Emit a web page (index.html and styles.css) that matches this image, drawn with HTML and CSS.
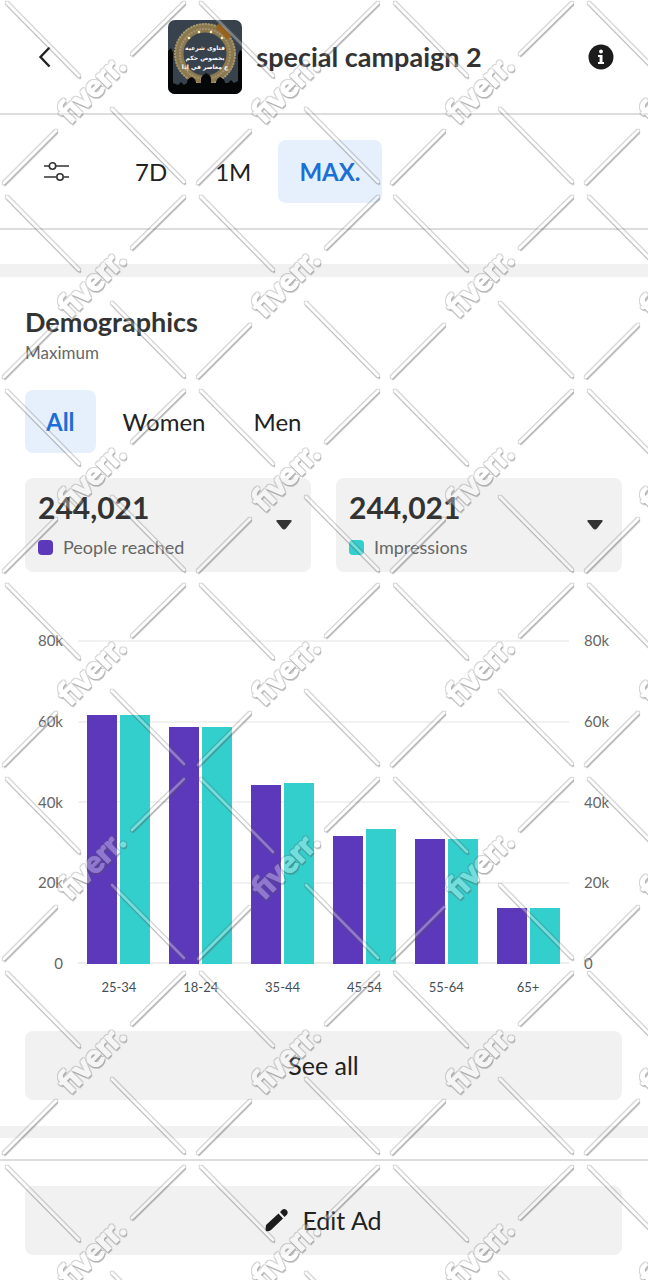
FILE: index.html
```html
<!DOCTYPE html>
<html lang="en">
<head>
<meta charset="utf-8">
<meta name="viewport" content="width=device-width, initial-scale=1">
<title>special campaign 2</title>
<link rel="stylesheet" href="styles.css">
</head>
<body>
<div class="page">
  <header class="header">
    <button class="icon-button back" type="button" aria-label="Back">
      <svg width="18" height="24" viewBox="0 0 18 24"><path d="M13.500 2.500 4.500 12l9 9.500" fill="none" stroke="#222" stroke-width="2.400"/></svg>
    </button>
    <div class="campaign">
      <svg class="thumb" viewBox="0 0 74 74" role="img" aria-label="Campaign picture">
        <rect width="74" height="74" fill="#37424d"/>
        <circle cx="37" cy="34" r="26" fill="none" stroke="#8a7850" stroke-width="9"/>
        <circle cx="37" cy="34" r="30" fill="none" stroke="#a8976c" stroke-width="2" stroke-dasharray="2 1"/>
        <circle cx="37" cy="34" r="25" fill="none" stroke="#a4936c" stroke-width="2" stroke-dasharray="2 1"/>
        <path d="M49 6a30 30 0 0 1 12 12" fill="none" stroke="#98631c" stroke-width="6"/>
        <g fill="#fff0b8"><circle cx="21" cy="18" r="1.3"/><circle cx="31" cy="12" r="1.3"/><circle cx="43" cy="12" r="1.3"/><circle cx="54" cy="18" r="1.3"/></g>
        <path d="M0 31l3-3 2 5v30l5 2 3-3 3 3 3-2q0-5 5-6 4 2 4 6h5v-5q1-3 5-5 5 2 5 6v4h5q0-4 4-6 5 2 5 6h3l3-3 3 3 4-2V35l2-5 4 3v41H0z" fill="#050607"/>
        <g class="thumb-text" text-anchor="middle"><text x="37" y="30">فتاوى شرعية</text><text x="37" y="40">بخصوص حكم</text><text x="37" y="49">ج معاصر في إذا</text></g>
      </svg>
      <h1 class="title">special campaign 2</h1>
    </div>
    <button class="icon-button info" type="button" aria-label="Information">
      <svg width="26" height="26" viewBox="0 0 26 26"><circle cx="13" cy="13" r="12.5" fill="#1c1c1c"/><circle cx="13" cy="7.5" r="1.9" fill="#fff"/><path d="M10 11h4.500v7H16v2h-6v-2h1.600v-5H10z" fill="#fff"/></svg>
    </button>
  </header>

  <nav class="toolbar" aria-label="Date range">
    <button class="icon-button filter" type="button" aria-label="Filters">
      <svg width="26" height="22" viewBox="0 0 26 22" fill="none" stroke="#333" stroke-width="1.600"><path d="M0 5h5M12 5h13M0 16h12M20 16h5"/><circle cx="8.500" cy="5" r="3.200"/><circle cx="16" cy="16" r="3.200"/></svg>
    </button>
    <div class="pills">
      <button class="pill" type="button">7D</button>
      <button class="pill" type="button">1M</button>
      <button class="pill selected" type="button" aria-pressed="true">MAX.</button>
    </div>
  </nav>

  <main class="main">
    <section class="demographics">
      <h2 class="heading">Demographics</h2>
      <p class="subheading">Maximum</p>
      <div class="pills audience">
        <button class="pill selected" type="button" aria-pressed="true">All</button>
        <button class="pill" type="button">Women</button>
        <button class="pill" type="button">Men</button>
      </div>

      <div class="metrics">
        <button class="metric" type="button">
          <span class="metric-body"><span class="number">244,021</span><span class="legend"><span class="swatch reached"></span>People reached</span></span>
          <svg width="18" height="12" viewBox="0 0 18 12"><path d="M2.500 1h13q2 0 .8 1.700L11 9.500q-2 2-4 0L1.700 2.700Q.5 1 2.500 1z" fill="#333"/></svg>
        </button>
        <button class="metric" type="button">
          <span class="metric-body"><span class="number">244,021</span><span class="legend"><span class="swatch impressions"></span>Impressions</span></span>
          <svg width="18" height="12" viewBox="0 0 18 12"><path d="M2.500 1h13q2 0 .8 1.700L11 9.500q-2 2-4 0L1.700 2.700Q.5 1 2.500 1z" fill="#333"/></svg>
        </button>
      </div>

      <div class="chart">
        <div class="axis left"><span>80k</span><span>60k</span><span>40k</span><span>20k</span><span>0</span></div>
        <div class="plot">
          <div class="grid"><i></i><i></i><i></i><i></i></div>
          <div class="bars">
            <div class="pair"><div class="bar reached" style="height:76.8%"></div><div class="bar impressions" style="height:76.8%"></div></div>
            <div class="pair"><div class="bar reached" style="height:73%"></div><div class="bar impressions" style="height:73%"></div></div>
            <div class="pair"><div class="bar reached" style="height:55.1%"></div><div class="bar impressions" style="height:55.9%"></div></div>
            <div class="pair"><div class="bar reached" style="height:39.5%"></div><div class="bar impressions" style="height:41.8%"></div></div>
            <div class="pair"><div class="bar reached" style="height:38.7%"></div><div class="bar impressions" style="height:38.7%"></div></div>
            <div class="pair"><div class="bar reached" style="height:17.2%"></div><div class="bar impressions" style="height:17.2%"></div></div>
          </div>
        </div>
        <div class="axis right"><span>80k</span><span>60k</span><span>40k</span><span>20k</span><span>0</span></div>
        <div class="ages"><span>25-34</span><span>18-24</span><span>35-44</span><span>45-54</span><span>55-64</span><span>65+</span></div>
      </div>

      <button class="wide-button" type="button">See all</button>
    </section>
  </main>

  <footer class="footer">
    <button class="wide-button" type="button">
      <svg width="24" height="24" viewBox="0 0 24 24" fill="#1c1c1c"><path d="M1 17 13.500 5.500l4.500 5L6 22q-2 1.500-4.500 1.200Q.5 23 .5 22zM15 4l2.500-2.500q2-1.200 4 .5 2.200 2 .8 4.200L19.500 9z"/></svg>
      Edit Ad
    </button>
  </footer>

  <svg class="watermark" aria-hidden="true">
    <defs>
      <filter id="emboss" x="-5%" y="-5%" width="110%" height="110%" color-interpolation-filters="sRGB">
        <feMorphology in="SourceAlpha" operator="dilate" radius="1" result="wide"/>
        <feGaussianBlur in="wide" stdDeviation="0.500" result="halo"/>
        <feFlood flood-color="#555" flood-opacity="0.240"/>
        <feComposite in2="halo" operator="in" result="haloShade"/>
        <feOffset in="SourceAlpha" dx="1" dy="2" result="moved"/>
        <feGaussianBlur in="moved" stdDeviation="0.500" result="drop"/>
        <feFlood flood-color="#555" flood-opacity="0.260"/>
        <feComposite in2="drop" operator="in" result="dropShade"/>
        <feMerge result="both"><feMergeNode in="haloShade"/><feMergeNode in="dropShade"/></feMerge>
        <feComposite in="both" in2="SourceAlpha" operator="out" result="rim"/>
        <feComponentTransfer in="SourceGraphic" result="face"><feFuncA type="linear" slope="0.320"/></feComponentTransfer>
        <feMerge><feMergeNode in="rim"/><feMergeNode in="face"/></feMerge>
      </filter>
      <pattern id="stamp" width="194" height="194" patternUnits="userSpaceOnUse">
        <g filter="url(#emboss)">
          <path d="M7 3 79 76M184 3l-52 51M112 109l72 73M56 131 4 183" fill="none" stroke="#fff" stroke-width="2.600" stroke-linecap="round"/>
          <text class="stamp-text" transform="translate(70 125) rotate(-45)">fiverr.</text>
        </g>
      </pattern>
    </defs>
    <rect width="100%" height="100%" fill="url(#stamp)"/>
  </svg>
</div>
</body>
</html>
```
FILE: styles.css
```css
* { box-sizing: border-box; }
body { margin: 0; background: #fff; color: #222; font-family: Lato, "Noto Sans", sans-serif; }
button { margin: 0; padding: 0; border: 0; background: none; color: inherit; font: inherit; cursor: pointer; }
svg { display: block; }
h1, h2, p { margin: 0; }

.page { position: relative; min-height: 100vh; overflow: hidden; }

.header { display: grid; grid-template-columns: 1fr auto 1fr; align-items: center; padding: 20px 34px 19px 36px; border-bottom: 2px solid #ddd; }
.icon-button { display: flex; align-items: center; justify-content: center; }
.back { justify-self: start; }
.info { justify-self: end; }
.campaign { display: flex; align-items: center; gap: 14px; }
.thumb { width: 74px; height: 74px; border-radius: 7px; }
.thumb-text { fill: #fff; font: bold 6px "DejaVu Sans", sans-serif; }
.title { color: #333; font-size: 27px; line-height: 36px; font-weight: 700; }

.toolbar { display: flex; align-items: center; gap: 44px; padding: 25px 44px; border-bottom: 2px solid #ddd; }
.pills { display: flex; gap: 6px; }
.pill { height: 63px; padding: 0 21px; border-radius: 8px; font-size: 24px; }
.pill.selected { background: #e6f0fc; color: #1b6fd6; font-weight: 700; }

.main { margin-top: 34px; border-top: 13px solid #f1f1f1; border-bottom: 12px solid #f1f1f1; }
.demographics { padding: 28px 26px 26px 25px; }
.heading { color: #333; font-size: 27px; line-height: 34px; }
.subheading { color: #666; font-size: 17px; line-height: 28px; }
.audience { margin-top: 23px; }

.metrics { display: grid; grid-template-columns: 1fr 1fr; gap: 25px; margin-top: 25px; }
.metric { display: flex; align-items: center; justify-content: space-between; height: 94px; padding: 0 18px 0 13px; border-radius: 8px; background: #f1f1f1; text-align: left; }
.metric-body { display: flex; flex-direction: column; gap: 10px; padding-bottom: 2px; }
.number { color: #333; font-size: 30px; line-height: 36px; font-weight: 700; }
.legend { display: flex; align-items: center; gap: 10px; color: #666; font-size: 18px; line-height: 24px; }
.swatch { width: 15px; height: 15px; border-radius: 4px; }
.reached { background: #5c39bb; }
.impressions { background: #33cfcd; }

.chart { display: grid; grid-template-columns: 38px 1fr 38px; column-gap: 15px; margin-top: 68px; }
.axis { display: flex; flex-direction: column; justify-content: space-between; height: 343px; margin: -10px 0; color: #666; font-size: 15px; line-height: 20px; }
.left { text-align: right; }
.plot { display: grid; height: 324px; }
.grid, .bars { grid-area: 1 / 1; }
.grid { display: grid; grid-template-rows: repeat(4, 1fr); border-bottom: 2px solid #eee; }
.grid i { border-top: 2px solid #f1f1f1; }
.bars { display: flex; height: 324px; }
.pair { flex: 1; display: flex; align-items: flex-end; justify-content: center; gap: 3px; }
.bar { width: 30px; }
.ages { grid-column: 2; display: flex; margin-top: 13px; color: #444f58; font-size: 13px; line-height: 20px; text-align: center; }
.ages span { flex: 1; }

.wide-button { display: flex; align-items: center; justify-content: center; gap: 13px; width: 100%; height: 69px; border-radius: 8px; background: #f1f1f1; font-size: 25px; padding-bottom: 2px; }
.demographics .wide-button { margin-top: 34px; }
.footer { margin-top: 21px; padding: 25px 26px 25px 25px; border-top: 2px solid #ddd; }

.watermark { position: absolute; inset: 0; width: 100%; height: 100%; pointer-events: none; }
.stamp-text { fill: #fff; stroke: #fff; stroke-width: 1px; font: 900 31px Lato, sans-serif; }
```
